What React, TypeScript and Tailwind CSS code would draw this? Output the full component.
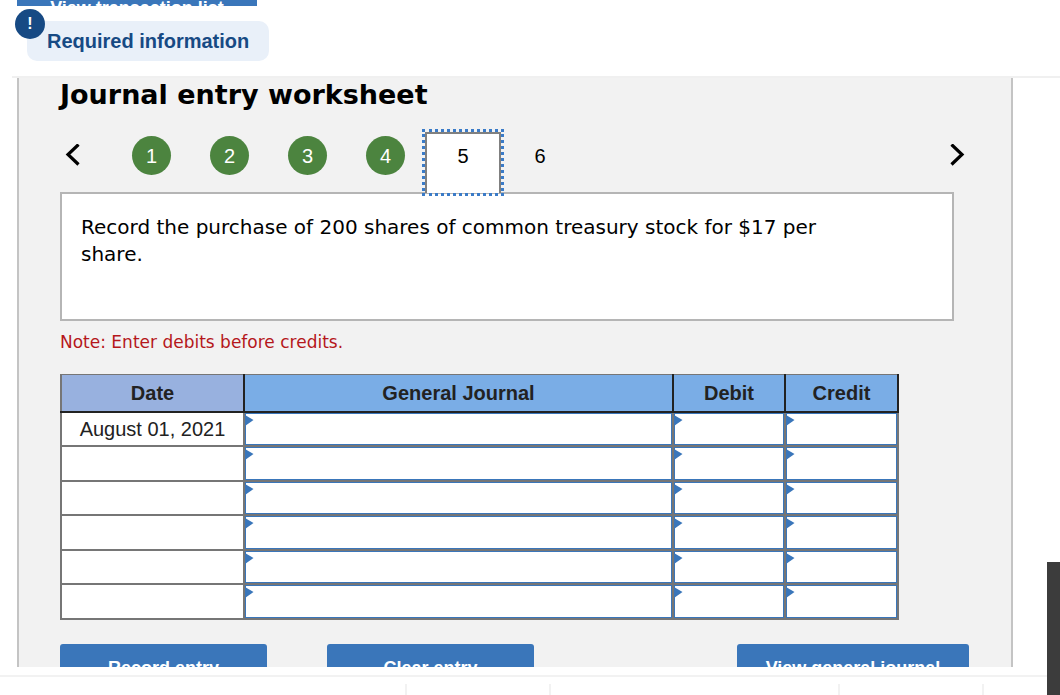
import { useState } from "react";

const COMPLETED_TABS = [1, 2, 3, 4];
const FOOTER_SEGMENTS = ["w-[407px]", "w-36", "w-[289px]", "w-36"];
const EMPTY_ROW = { date: "", account: "", debit: "", credit: "" };
const HEAD_CELL = "border-2 border-t border-[#222] border-t-[#767676] p-0 text-xl leading-6 font-bold";

interface EntryCellProps {
  label: string;
  value: string;
  onChange: (value: string) => void;
}

function EntryCell({ label, value, onChange }: EntryCellProps) {
  return (
    <td className="h-8 border-2 border-[#767676] p-0">
      <div className="relative h-full">
        <input
          type="text"
          aria-label={label}
          value={value}
          onChange={(e) => onChange(e.target.value)}
          className="block h-full w-full border border-[#3a76ba] bg-white px-4 text-xl outline-none"
        />
        <svg className="pointer-events-none absolute left-0 top-0.5" width="9" height="11" viewBox="0 0 9 11">
          <path d="M0 0 L8.5 5 L0 11 Z" fill="#3a76ba" />
        </svg>
      </div>
    </td>
  );
}

export default function App() {
  const [activeTab, setActiveTab] = useState(5);
  const [rows, setRows] = useState([
    { ...EMPTY_ROW, date: "August 01, 2021" },
    ...Array.from({ length: 5 }, () => ({ ...EMPTY_ROW })),
  ]);

  function updateRow(index: number, field: string, value: string) {
    setRows((prev) => prev.map((row, i) => (i === index ? { ...row, [field]: value } : row)));
  }

  return (
    <div className="relative flex h-screen flex-col overflow-hidden bg-white font-['Liberation_Sans',Arial,sans-serif]">
      <main className="flex min-h-0 flex-1 flex-col overflow-hidden">
        {/* Scrolled-off button */}
        <div className="h-1.5 shrink-0 overflow-hidden pl-[17px]">
          <button type="button" className="-mt-4 block h-12 w-60 bg-[#3a76ba] text-lg font-bold text-white">
            View transaction list
          </button>
        </div>

        {/* Required information */}
        <div className="ml-3 flex h-[72px] shrink-0 border-b-2 border-[#f0f0f0] pl-[15px] pt-[15px]">
          <div className="relative flex h-10 items-center rounded-[10px] bg-[#e9f0f9] px-5 text-xl font-bold text-[#174a84]">
            <span className="absolute -left-3 -top-3 flex size-[30px] items-center justify-center rounded-full bg-[#174a84] text-base text-white">
              !
            </span>
            Required information
          </div>
        </div>

        {/* Worksheet */}
        <section className="ml-[17px] mr-[47px] min-h-0 flex-1 overflow-hidden border-x-2 border-[#c4c4c4] bg-[#f2f2f2] pl-[41px] pr-[57px] text-black">
          <h1 className="mb-5 font-['DejaVu_Sans',Verdana,sans-serif] text-[27px] font-bold leading-[34px]">
            Journal entry worksheet
          </h1>

          <nav className="relative z-10 -mr-[11px] -mb-px flex h-[61px]">
            <button type="button" aria-label="Previous" className="h-[46px] w-[53px] pl-[5px]">
              <svg width="16" height="22" viewBox="0 0 16 22" fill="none" stroke="#000" strokeWidth="3.2">
                <path d="M13.5 0.5 L3 10.5 L13.5 20.5" />
              </svg>
            </button>
            <div className="flex gap-px text-xl">
              {COMPLETED_TABS.map((tab) => (
                <button key={tab} type="button" onClick={() => setActiveTab(tab)} className="flex w-[77px] justify-center pt-1">
                  <span className="flex size-[39px] items-center justify-center rounded-full bg-[#4c843f] text-white">{tab}</span>
                </button>
              ))}
              {[5, 6].map((tab) => (
                <button
                  key={tab}
                  type="button"
                  onClick={() => setActiveTab(tab)}
                  className={
                    activeTab === tab
                      ? "flex w-[76px] justify-center border-2 border-b-0 border-[#808080] bg-white pt-0.5 outline-3 outline-dotted outline-[#3a7bc8]"
                      : "flex w-[76px] justify-center pt-1"
                  }
                >
                  <span className="flex size-[39px] items-center justify-center">{tab}</span>
                </button>
              ))}
            </div>
            <button type="button" aria-label="Next" className="ml-auto h-[46px]">
              <svg width="16" height="22" viewBox="0 0 16 22" fill="none" stroke="#000" strokeWidth="3.2">
                <path d="M2.5 0.5 L13 10.5 L2.5 20.5" />
              </svg>
            </button>
          </nav>

          <div className="min-h-[129px] border-2 border-[#b5b5b5] bg-white pl-[19px] pr-28 pt-5 font-['DejaVu_Sans',Verdana,sans-serif] text-xl leading-[27px]">
            Record the purchase of 200 shares of common treasury stock for $17 per share.
          </div>

          <p className="mt-[9px] font-['DejaVu_Sans',Verdana,sans-serif] text-[17px] leading-6 text-[#b5171b]">
            Note: Enter debits before credits.
          </p>

          <div className="mt-5 pr-[55px]">
            <table className="w-full table-fixed border-collapse text-[#222]">
              <colgroup>
                <col className="w-[183px]" />
                <col />
                <col className="w-28" />
                <col className="w-[113px]" />
              </colgroup>
              <thead>
                <tr className="h-[37px] bg-[#7aade6]">
                  <th className={`${HEAD_CELL} border-l-[#767676] bg-[#98b1df]`}>Date</th>
                  <th className={HEAD_CELL}>General Journal</th>
                  <th className={HEAD_CELL}>Debit</th>
                  <th className={HEAD_CELL}>Credit</th>
                </tr>
              </thead>
              <tbody>
                {rows.map((row, i) => (
                  <tr key={i} className="h-[34px] even:h-[35px]">
                    <td className="h-8 border-2 border-[#767676] bg-white p-0 text-center text-xl leading-6">{row.date}</td>
                    <EntryCell label="General Journal" value={row.account} onChange={(v) => updateRow(i, "account", v)} />
                    <EntryCell label="Debit" value={row.debit} onChange={(v) => updateRow(i, "debit", v)} />
                    <EntryCell label="Credit" value={row.credit} onChange={(v) => updateRow(i, "credit", v)} />
                  </tr>
                ))}
              </tbody>
            </table>
          </div>

          {/* Actions */}
          <div className="-mr-[15px] mt-6 flex text-lg font-bold text-white">
            <button type="button" className="h-12 w-[207px] rounded-[3px] bg-[#3a76ba]">
              Record entry
            </button>
            <button type="button" className="ml-[60px] h-12 w-[207px] rounded-[3px] bg-[#3a76ba]">
              Clear entry
            </button>
            <button type="button" className="ml-auto h-12 w-58 rounded-[3px] bg-[#3a76ba]">
              View general journal
            </button>
          </div>
        </section>
      </main>

      {/* Bottom bar */}
      <footer className="h-7 shrink-0 pt-2">
        <div className="flex h-5 border-t-2 border-[#f2f2f2] pt-[7px]">
          {FOOTER_SEGMENTS.map((width, i) => (
            <div key={i} className={`${width} shrink-0 border-r-2 border-[#f2f2f2]`} />
          ))}
        </div>
      </footer>

      <div className="absolute bottom-0 right-0 h-[133px] w-[13px] bg-[#3c3c3c]" />
    </div>
  );
}
